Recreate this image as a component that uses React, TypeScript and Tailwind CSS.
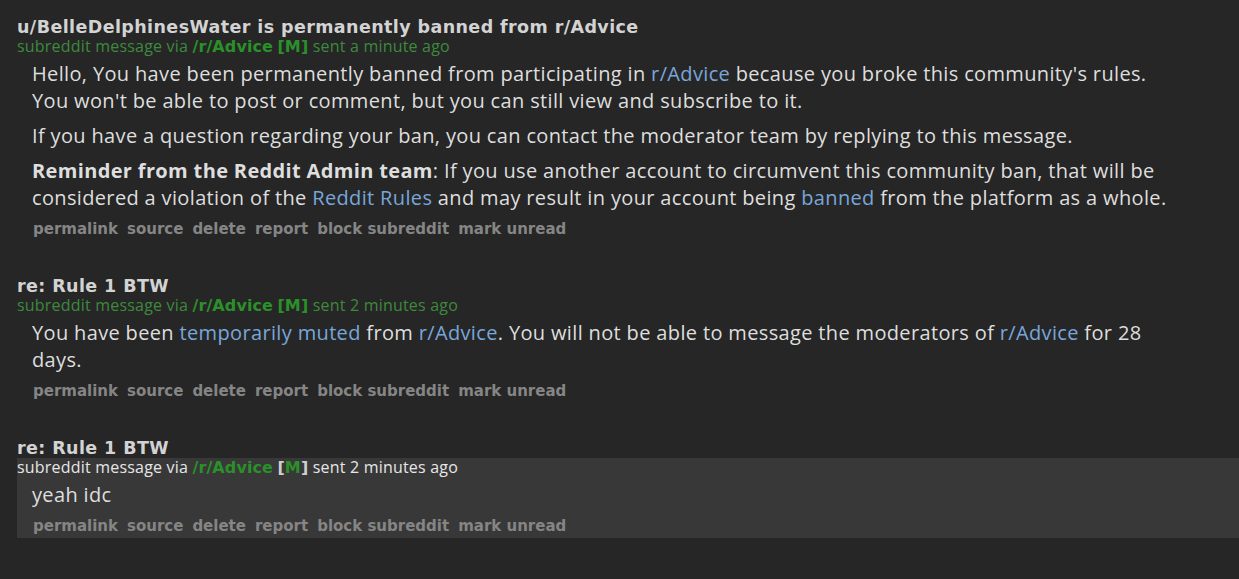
import React from "react";

type Msg = {
  title: string;
  when: string;
  body: React.ReactNode;
  unread?: boolean;
};

const Link = ({ children }: { children: React.ReactNode }) => (
  <a className="text-[#78a6da] cursor-pointer">{children}</a>
);

const buttons = ["permalink", "source", "delete", "report", "block subreddit", "mark unread"];

const messages: Msg[] = [
  {
    title: "u/BelleDelphinesWater is permanently banned from r/Advice",
    when: "sent a minute ago",
    body: (
      <>
        <p>
          Hello, You have been permanently banned from participating in <Link>r/Advice</Link> because you broke this
          community's rules.
          <br />
          You won't be able to post or comment, but you can still view and subscribe to it.
        </p>
        <p className="mt-2">
          If you have a question regarding your ban, you can contact the moderator team by replying to this message.
        </p>
        <p className="mt-2">
          <strong className="font-bold">Reminder from the Reddit Admin team</strong>: If you use another account to
          circumvent this community ban, that will be
          <br />
          considered a violation of the <Link>Reddit Rules</Link> and may result in your account being{" "}
          <Link>banned</Link> from the platform as a whole.
        </p>
      </>
    ),
  },
  {
    title: "re: Rule 1 BTW",
    when: "sent 2 minutes ago",
    body: (
      <p>
        You have been <Link>temporarily muted</Link> from <Link>r/Advice</Link>. You will not be able to message the
        moderators of <Link>r/Advice</Link> for 28
        <br />
        days.
      </p>
    ),
  },
  {
    title: "re: Rule 1 BTW",
    when: "sent 2 minutes ago",
    unread: true,
    body: <p>yeah idc</p>,
  },
];

const Message = ({ msg }: { msg: Msg }) => {
  return (
    <div className="mb-[38px]">
      <div className="[font-family:'DejaVu_Sans',sans-serif] font-bold text-[17.5px] leading-[20px] tracking-[0.4px] text-[#d3d3d3]">
        {msg.title}
      </div>
      <div className={msg.unread ? "bg-[#383838] pb-[3px]" : ""}>
        <div
          className={`[font-family:'Open_Sans',sans-serif] text-[16px] leading-[18px] tracking-[0.2px] ${
            msg.unread ? "text-[#e6e6e6]" : "text-[#3d8a3d]"
          }`}
        >
          subreddit message via{" "}
          <span className="[font-family:'DejaVu_Sans',sans-serif] font-bold tracking-[0.1px] text-[#2a912a]">/r/Advice</span>{" "}
          <span className="[font-family:'DejaVu_Sans',sans-serif] font-bold tracking-[0.1px]">
            <span className={msg.unread ? "text-[#cfcfcf]" : "text-[#2a912a]"}>[</span>
            <span className="text-[#2a912a]">M</span>
            <span className={msg.unread ? "text-[#cfcfcf]" : "text-[#2a912a]"}>]</span>
          </span>{" "}
          {msg.when}
        </div>
        <div className="pl-[15px] mt-[4px] [font-family:'Open_Sans',sans-serif] text-[20px] leading-[27px] tracking-[0.35px] text-[#dedede]">
          {msg.body}
        </div>
        <div className="pl-[16px] mt-[9px] flex gap-[9px] [font-family:'DejaVu_Sans',sans-serif] font-bold text-[15px] leading-[18px] text-[#858585]">
          {buttons.map((b) => (
            <a key={b} className="cursor-pointer">
              {b}
            </a>
          ))}
        </div>
      </div>
    </div>
  );
};

export default function App() {
  return (
    <div className="min-h-[579px] w-full bg-[#262626] pl-[17px] pt-[17px] overflow-hidden">
      {messages.map((m, i) => (
        <Message key={i} msg={m} />
      ))}
    </div>
  );
}
